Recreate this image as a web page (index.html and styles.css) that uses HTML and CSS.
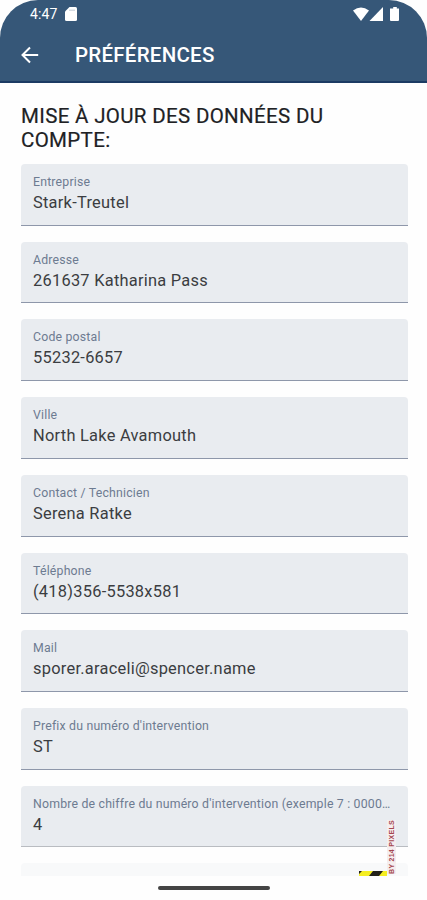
FILE: index.html
```
<!DOCTYPE html>
<html lang="fr">
<head>
  <meta charset="UTF-8" />
  <meta name="viewport" content="width=device-width, initial-scale=1.0" />
  <title>Préférences</title>
  <link rel="stylesheet" href="styles.css">
</head>
<body>

  <!-- Status bar + title -->
  <header class="app-header">
    <div class="status-bar">
      <span class="status-time">4:47</span>
      <svg class="icon-sd" width="12" height="14" viewBox="0 0 12 14">
        <path d="M4.5 0H10.5Q12 0 12 1.500V12.500Q12 14 10.500 14H1.500Q0 14 0 12.500V4.500Z" fill="#fff" />
        <path d="M4 3.200H10" stroke="#c3cbd6" stroke-width="1" />
      </svg>
      <svg class="icon-status" width="48" height="15" viewBox="0 0 48 15">
        <path d="M0 3.500Q8 -2.500 16 3.500L8 14Z" fill="#fff" />
        <path d="M30 0V14H16.500Z" fill="#fff" />
        <path d="M40.200 0H43.800V1.500H46V13Q46 14 45 14H38Q37 14 37 13V1.500H40.200Z" fill="#fff" />
      </svg>
    </div>
    <div class="title-bar">
      <button class="back-btn" aria-label="Retour">
        <svg width="18" height="18" viewBox="0 0 18 18">
          <path d="M17.200 9H2M9 1.500L1.500 9L9 16.500" fill="none" stroke="#fff" stroke-width="2" />
        </svg>
      </button>
      <h1>PRÉFÉRENCES</h1>
    </div>
  </header>

  <!-- Account form -->
  <main class="content">
    <h2>MISE À JOUR DES DONNÉES DU COMPTE:</h2>
    <form class="fields">
      <div class="field"><span class="label">Entreprise</span><span class="value">Stark-Treutel</span></div>
      <div class="field"><span class="label">Adresse</span><span class="value">261637 Katharina Pass</span></div>
      <div class="field"><span class="label">Code postal</span><span class="value">55232-6657</span></div>
      <div class="field"><span class="label">Ville</span><span class="value">North Lake Avamouth</span></div>
      <div class="field"><span class="label">Contact / Technicien</span><span class="value">Serena Ratke</span></div>
      <div class="field"><span class="label">Téléphone</span><span class="value">(418)356-5538x581</span></div>
      <div class="field"><span class="label">Mail</span><span class="value">sporer.araceli@spencer.name</span></div>
      <div class="field"><span class="label">Prefix du numéro d'intervention</span><span class="value">ST</span></div>
      <div class="field field-last"><span class="label">Nombre de chiffre du numéro d'intervention (exemple 7 : 0000…</span><span class="value">4</span></div>
      <div class="field field-empty"></div>
    </form>

    <!-- Overflow warning -->
    <svg class="overflow-stripe" width="28" height="5" viewBox="0 0 28 5">
      <path d="M0 0H28V5H0Z" fill="#f5ee22" />
      <path d="M0 0H3L0 3ZM14 0H24L20 5H10Z" fill="#24221b" />
    </svg>
    <span class="overflow-text">BY 214 PIXELS</span>
  </main>

  <!-- Gesture bar -->
  <footer class="nav-bar"><span class="nav-handle"></span></footer>

</body>
</html>
```

FILE: styles.css
```
* {
  box-sizing: border-box;
}

body {
  font-family: Roboto, sans-serif;
  background-color: #fefefe;
  color: #202124;
  margin: 0;
  height: 900px;
  display: flex;
  flex-direction: column;
  overflow: hidden;
}

.app-header {
  height: 83px;
  flex: none;
  background-color: #365778;
  border-bottom: 2px solid #1c3b63;
  border-radius: 38px 38px 0 0;
  color: #ffffff;
}

.status-bar {
  display: flex;
  align-items: center;
  height: 28px;
  padding: 0 26px 0 30px;
}

.status-time {
  font-size: 14px;
  font-weight: 400;
  letter-spacing: 0.1px;
}

.icon-sd {
  margin-left: 8px;
}

.icon-status {
  margin-left: auto;
}

.title-bar {
  display: flex;
  align-items: center;
  height: 53px;
  padding-left: 21px;
}

.back-btn {
  display: flex;
  padding: 0;
  border: none;
  background: none;
}

h1 {
  margin: 0 0 0 36px;
  font-size: 20.5px;
  font-weight: 500;
  line-height: 24px;
  letter-spacing: 0.25px;
}

.content {
  position: relative;
  height: 793px;
  padding: 21px 19px 0 21px;
  overflow: hidden;
}

h2 {
  margin: 0;
  font-size: 20.5px;
  font-weight: 400;
  line-height: 24px;
  letter-spacing: 0.33px;
  -webkit-text-stroke: 0.2px #202124;
}

.fields {
  display: flex;
  flex-direction: column;
  gap: 16px;
  margin-top: 12px;
}

.field {
  display: flex;
  flex-direction: column;
  flex: none;
  height: 61.73px;
  padding: 10px 12px 0;
  background-color: #e9ecf0;
  border-bottom: 1.5px solid #8e97aa;
  border-radius: 4px 4px 0 0;
}

.field-last {
  border-bottom-color: #b9bcc1;
}

.field-empty {
  background-color: #f8f9fa;
  border: none;
}

.label {
  font-size: 12.3px;
  line-height: 16px;
  letter-spacing: 0.19px;
  color: #6d7b91;
  white-space: nowrap;
}

.value {
  margin-top: 2px;
  font-size: 16.4px;
  line-height: 21px;
  letter-spacing: 0.26px;
  color: #3b3d41;
}

.overflow-stripe {
  position: absolute;
  left: 359px;
  bottom: 0;
}

.overflow-text {
  position: absolute;
  left: 387px;
  top: 737px;
  writing-mode: vertical-rl;
  transform: rotate(180deg);
  background-color: #f5eeef;
  color: #a5474e;
  font-family: "Liberation Sans", sans-serif;
  font-size: 7px;
  font-weight: 700;
  line-height: 9px;
  letter-spacing: 0.3px;
}

.nav-bar {
  display: flex;
  justify-content: center;
  align-items: center;
  height: 24px;
}

.nav-handle {
  width: 112px;
  height: 4px;
  border-radius: 2px;
  background-color: #444444;
}
```
